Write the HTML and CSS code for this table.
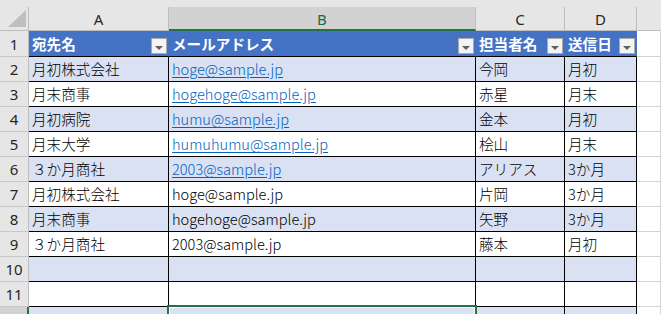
FILE: index.html
```html
<!DOCTYPE html>
<html lang="ja">
<head>
<meta charset="utf-8">
<title>Sheet</title>
<link rel="stylesheet" href="styles.css">
</head>
<body>
<div class="sheet">
  <div class="strip"></div>
  <div class="grid">
    <div class="corner"><svg width="28" height="23" viewBox="0 0 28 23"><polygon points="8,20 26,20 26,3" fill="#bfbfbf"/></svg></div>
    <div class="colhead">A</div>
    <div class="colhead sel">B</div>
    <div class="colhead">C</div>
    <div class="colhead">D</div>
    <div class="colhead last"></div>

    <div class="rowhead">1</div>
    <div class="th"><span>宛先名</span><span class="dd"></span></div>
    <div class="th"><span>メールアドレス</span><span class="dd"></span></div>
    <div class="th"><span>担当者名</span><span class="dd"></span></div>
    <div class="th end"><span>送信日</span><span class="dd"></span></div>
    <div class="out"></div>

    <div class="rowhead">2</div>
    <div class="td band">月初株式会社</div>
    <div class="td band"><a class="link">hoge@sample.jp</a></div>
    <div class="td band">今岡</div>
    <div class="td band">月初</div>
    <div class="out"></div>

    <div class="rowhead">3</div>
    <div class="td">月末商事</div>
    <div class="td"><a class="link">hogehoge@sample.jp</a></div>
    <div class="td">赤星</div>
    <div class="td">月末</div>
    <div class="out"></div>

    <div class="rowhead">4</div>
    <div class="td band">月初病院</div>
    <div class="td band"><a class="link">humu@sample.jp</a></div>
    <div class="td band">金本</div>
    <div class="td band">月初</div>
    <div class="out"></div>

    <div class="rowhead">5</div>
    <div class="td">月末大学</div>
    <div class="td"><a class="link">humuhumu@sample.jp</a></div>
    <div class="td">桧山</div>
    <div class="td">月末</div>
    <div class="out"></div>

    <div class="rowhead">6</div>
    <div class="td band">３か月商社</div>
    <div class="td band"><a class="link">2003@sample.jp</a></div>
    <div class="td band">アリアス</div>
    <div class="td band">3か月</div>
    <div class="out"></div>

    <div class="rowhead">7</div>
    <div class="td">月初株式会社</div>
    <div class="td">hoge@sample.jp</div>
    <div class="td">片岡</div>
    <div class="td">3か月</div>
    <div class="out"></div>

    <div class="rowhead">8</div>
    <div class="td band">月末商事</div>
    <div class="td band">hogehoge@sample.jp</div>
    <div class="td band">矢野</div>
    <div class="td band">3か月</div>
    <div class="out"></div>

    <div class="rowhead">9</div>
    <div class="td">３か月商社</div>
    <div class="td">2003@sample.jp</div>
    <div class="td">藤本</div>
    <div class="td">月初</div>
    <div class="out"></div>

    <div class="rowhead">10</div>
    <div class="td band"></div>
    <div class="td band"></div>
    <div class="td band"></div>
    <div class="td band"></div>
    <div class="out"></div>

    <div class="rowhead">11</div>
    <div class="td"></div>
    <div class="td"></div>
    <div class="td"></div>
    <div class="td"></div>
    <div class="out"></div>

    <div class="rowhead selrow">12</div>
    <div class="td band"></div>
    <div class="td band active"></div>
    <div class="td band"></div>
    <div class="td band"></div>
    <div class="out"></div>
  </div>
</div>
</body>
</html>
```

FILE: styles.css
```css
html, body {
  margin: 0;
  padding: 0;
  background: #ffffff;
  overflow: hidden;
}

.sheet {
  width: 661px;
  height: 314px;
  overflow: hidden;
  font-family: "Noto Sans CJK JP", "Noto Sans", sans-serif;
}

.strip {
  height: 7px;
  background: #e6e6e6;
}

.grid {
  display: grid;
  grid-template-columns: 29px 140px 307px 89px 72px 24px;
  grid-template-rows: 24px 26px repeat(11, 25px);
}

.grid > div {
  box-sizing: border-box;
  border-right: 1px solid #d4d4d4;
  border-bottom: 1px solid #d4d4d4;
  min-width: 0;
}

.corner {
  background: #e6e6e6;
  border-right-color: #bdbdbd !important;
  border-bottom-color: #bdbdbd !important;
}

.corner svg {
  display: block;
}

.colhead {
  background: #e6e6e6;
  border-right-color: #bdbdbd !important;
  border-bottom-color: #bdbdbd !important;
  display: flex;
  align-items: center;
  justify-content: center;
  font-family: "Noto Sans", sans-serif;
  font-size: 15px;
  color: #262626;
  padding-top: 1px;
}

.colhead.sel {
  background: #d2d2d2;
  color: #1e6b41;
  border-bottom: 2px solid #217346 !important;
}

.colhead.last {
  border-right-color: #e6e6e6 !important;
}

.rowhead {
  background: #e6e6e6;
  border-right-color: #bdbdbd !important;
  border-bottom-color: #c8c8c8 !important;
  display: flex;
  align-items: center;
  justify-content: center;
  font-family: "Noto Sans", sans-serif;
  font-size: 15px;
  color: #262626;
}

.rowhead.selrow {
  background: #d2d2d2;
  color: #1e6b41;
  border-right: 2px solid #217346 !important;
}

.th {
  background: #4472c4;
  border-right-color: #4472c4 !important;
  border-bottom: 1px solid #000000 !important;
  display: flex;
  justify-content: space-between;
  align-items: flex-start;
  padding: 3px 1px 0 3px;
  color: #ffffff;
  font-weight: bold;
  font-size: 14.6px;
  line-height: 20px;
  white-space: nowrap;
}

.dd {
  box-sizing: border-box;
  flex: 0 0 16px;
  width: 16px;
  height: 16px;
  margin-top: 4px;
  background: #f4f4f4;
  border: 1px solid #a9a9a9;
  display: flex;
  align-items: center;
  justify-content: center;
}

.dd::after {
  content: "";
  display: block;
  margin-top: 3px;
  border-left: 4px solid transparent;
  border-right: 4px solid transparent;
  border-top: 4px solid #5f5f5f;
}

.td {
  border-right: 1px solid #000000 !important;
  border-bottom: 1px solid #000000 !important;
  background: #ffffff;
  display: flex;
  align-items: center;
  padding: 0 0 0 3px;
  font-size: 14.6px;
  font-weight: 300;
  line-height: 20px;
  color: #000000;
  white-space: nowrap;
  overflow: hidden;
}

.td.band {
  background: #d9e1f2;
}

.td.active {
  position: relative;
  overflow: visible;
}

.td.active::after {
  content: "";
  position: absolute;
  left: -2px;
  top: -2px;
  right: -2px;
  bottom: -2px;
  border: 2px solid #217346;
  box-shadow: inset 0 0 0 1px #ffffff;
}

.link {
  color: #0563c1;
  text-decoration: underline;
  text-underline-offset: 2px;
}

.out {
  background: #ffffff;
}
```
